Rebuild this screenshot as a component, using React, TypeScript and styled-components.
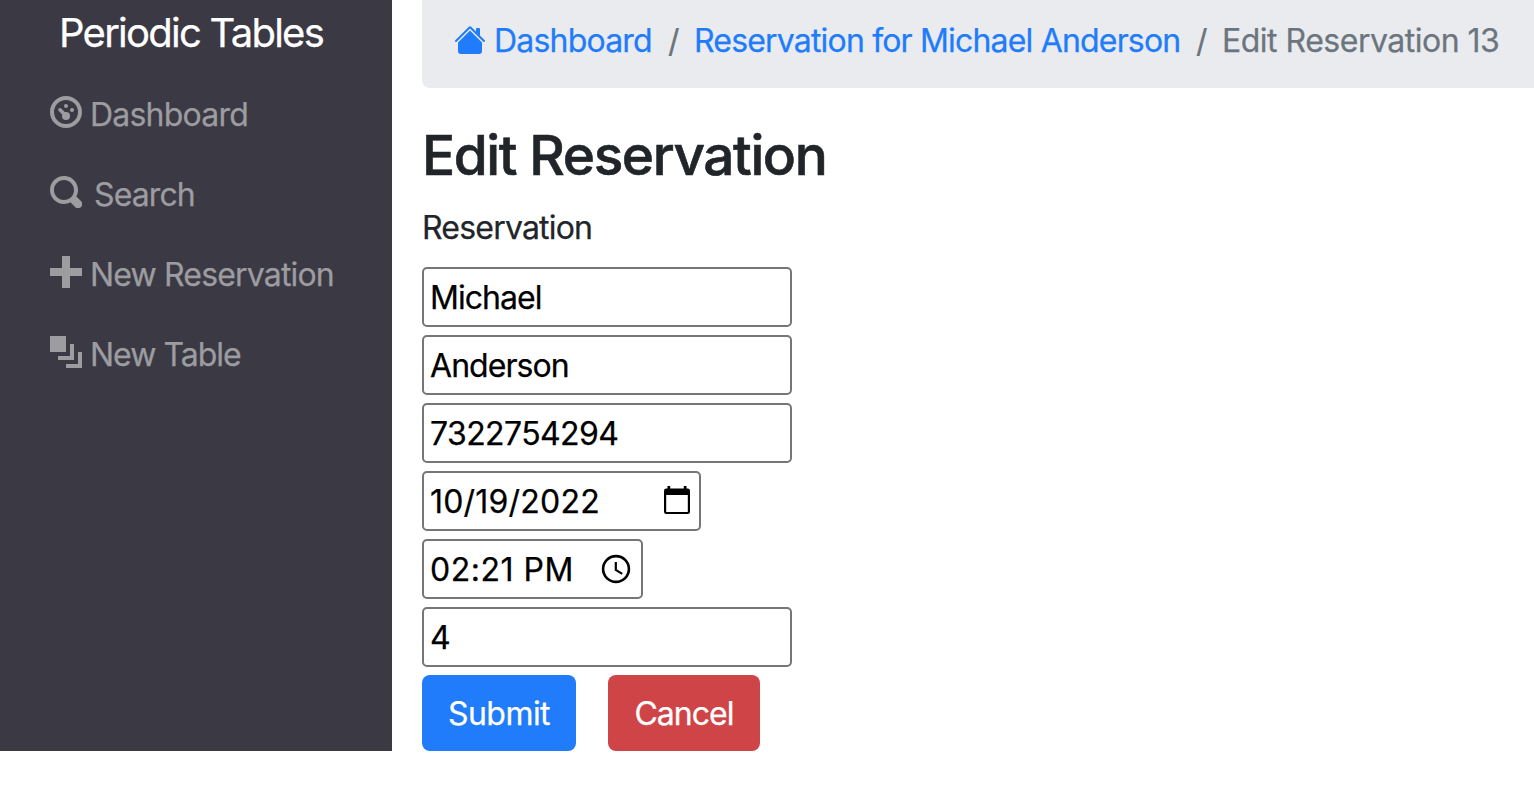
import React from "react";
import styled, { createGlobalStyle } from "styled-components";

const GlobalStyle = createGlobalStyle`
  *, *::before, *::after { box-sizing: border-box; }
  body {
    margin: 0;
    overflow: hidden;
    background: #fff;
    color: #212529;
    font-family: Inter, "Liberation Sans", sans-serif;
    font-size: 32px;
    line-height: 48px;
    -webkit-text-stroke: 0.25px currentColor;
  }
`;

const Page = styled.div`
  display: flex;
  align-items: flex-start;
  width: 1534px;
  height: 794px;
  overflow: hidden;
`;

const Sidebar = styled.nav`
  flex: 0 0 392px;
  height: 751px;
  background: #3b3a44;
`;

const Brand = styled.a<{ $spacing: number }>`
  display: block;
  padding: 3px 0 0 59px;
  height: 74px;
  color: #fff;
  font-size: 40px;
  line-height: 60px;
  white-space: nowrap;
  letter-spacing: ${(p) => p.$spacing}px;
`;

const NavList = styled.ul`
  margin: 0;
  padding: 0;
  list-style: none;
`;

const NavItem = styled.li<{ $gap: number; $spacing: number }>`
  display: flex;
  align-items: center;
  gap: ${(p) => p.$gap}px;
  height: 80px;
  padding-left: 50px;
  color: #9c9ca1;
  white-space: nowrap;
  letter-spacing: ${(p) => p.$spacing}px;

  svg {
    flex: none;
    margin-bottom: 4px;
  }

  span {
    padding-top: 2px;
  }
`;

const Main = styled.main`
  flex: none;
  width: 1142px;
  padding-left: 30px;
`;

const Breadcrumb = styled.ol`
  display: flex;
  align-items: center;
  height: 88px;
  margin: 0;
  padding: 0 0 6px 32px;
  list-style: none;
  border-radius: 0 0 0 8px;
  background: #e9ebef;
  white-space: nowrap;
`;

const Crumb = styled.li<{ $link?: boolean; $width: number; $spacing: number }>`
  display: flex;
  align-items: center;
  gap: 8px;
  flex: none;
  width: ${(p) => p.$width}px;
  color: ${(p) => (p.$link ? "#207cfa" : "#6c757d")};
  letter-spacing: ${(p) => p.$spacing}px;

  svg {
    flex: none;
    margin-bottom: 2px;
  }
`;

const Title = styled.h1<{ $spacing: number }>`
  margin: 34px 0 0;
  height: 67px;
  font-size: 55px;
  line-height: 67px;
  font-weight: 500;
  white-space: nowrap;
  -webkit-text-stroke: 0.6px currentColor;
  letter-spacing: ${(p) => p.$spacing}px;
`;

const Legend = styled.p<{ $spacing: number }>`
  margin: 15px 0 15px;
  letter-spacing: ${(p) => p.$spacing}px;
`;

const Form = styled.form`
  display: flex;
  flex-direction: column;
  gap: 8px;
`;

const Field = styled.label<{ $width: number; $end?: number }>`
  display: flex;
  align-items: center;
  width: ${(p) => p.$width}px;
  height: 60px;
  padding: 0 ${(p) => p.$end ?? 8}px 0 6px;
  border: 2px solid #767676;
  border-radius: 5px;
  background: #fff;

  svg {
    flex: none;
  }
`;

const Input = styled.input<{ $spacing: number }>`
  flex: 1;
  min-width: 0;
  height: 50px;
  margin: 0;
  padding: 1px 0 0;
  border: 0;
  outline: 0;
  background: transparent;
  color: #000;
  font: inherit;
  letter-spacing: ${(p) => p.$spacing}px;
`;

const Actions = styled.div`
  display: flex;
  gap: 32px;
`;

const Button = styled.button<{ $color: string; $width: number; $spacing: number }>`
  width: ${(p) => p.$width}px;
  height: 76px;
  padding: 2px 0 0;
  border: 0;
  border-radius: 8px;
  background: ${(p) => p.$color};
  color: #fff;
  font: inherit;
  letter-spacing: ${(p) => p.$spacing}px;
`;

const Glyph = ({ children }: { children: React.ReactNode }) => (
  <svg width="32" height="32" viewBox="0 0 8 8" fill="currentColor">
    {children}
  </svg>
);

const navItems = [
  {
    label: "Dashboard",
    gap: 8,
    spacing: -0.78,
    icon: (
      <>
        <circle cx="4" cy="4" r="3.5" fill="none" stroke="currentColor" />
        <circle cx="4" cy="2.5" r="0.5" />
        <circle cx="5.5" cy="3.5" r="0.5" />
        <circle cx="4" cy="5" r="1" />
        <path d="M2.500 3.450L4 4.950" stroke="currentColor" strokeWidth="0.9" strokeLinecap="round" />
      </>
    ),
  },
  {
    label: "Search",
    gap: 12,
    spacing: -0.9,
    icon: (
      <path d="M3.5 0c-1.93 0-3.5 1.57-3.5 3.5s1.57 3.5 3.5 3.5c.59 0 1.17-.14 1.66-.41a1 1 0 0 0 .13.13l1 1a1.02 1.02 0 1 0 1.44-1.44l-1-1a1 1 0 0 0-.16-.13c.27-.49.44-1.06.44-1.66 0-1.93-1.55-3.5-3.5-3.5zm0 1c1.39 0 2.5 1.11 2.5 2.5 0 .66-.24 1.27-.66 1.72-.01.01-.02.02-.03.03a1 1 0 0 0-.13.13c-.44.4-1.04.63-1.69.63-1.39 0-2.5-1.11-2.5-2.5s1.11-2.5 2.5-2.5z" />
    ),
  },
  {
    label: "New Reservation",
    gap: 8,
    spacing: -0.83,
    icon: <path d="M3 0v3h-3v2h3v3h2v-3h3v-2h-3v-3h-2z" />,
  },
  {
    label: "New Table",
    gap: 8,
    spacing: -1,
    icon: <path d="M0 0v4h4v-4h-4zm5 2v3h-3v1h4v-4h-1zm2 2v3h-3v1h4v-4h-1z" />,
  },
];

const HouseIcon = () => (
  <svg width="32" height="32" viewBox="0 0 16 16" fill="currentColor">
    <path d="M8 3.293l6 6V13.5a1.5 1.5 0 0 1-1.5 1.5h-9A1.5 1.5 0 0 1 2 13.5V9.293l6-6zM13 2.5V6l-2-2V2.5a.5.5 0 0 1 .5-.5h1a.5.5 0 0 1 .5.5z" />
    <path d="M7.293 1.5a1 1 0 0 1 1.414 0l6.647 6.646a.5.5 0 0 1-.708.708L8 2.207 1.354 8.854a.5.5 0 1 1-.708-.708L7.293 1.5z" />
  </svg>
);

const CalendarIcon = () => (
  <svg width="28" height="30" viewBox="0 0 28 30">
    <path
      fillRule="evenodd"
      d="M4.5 0h2.700v2.500h13.600V0h2.700v2.500h1.200A2.300 2.300 0 0 1 27 4.800v20.900a2.300 2.300 0 0 1-2.300 2.300H3.300A2.300 2.300 0 0 1 1 25.700V4.800A2.300 2.300 0 0 1 3.300 2.500H4.500zM3.200 9v17h21.600V9z"
    />
  </svg>
);

const ClockIcon = () => (
  <svg width="30" height="30" viewBox="0 0 30 30" fill="none" stroke="#000">
    <circle cx="15" cy="15" r="12.900" strokeWidth="2.600" />
    <path d="M14.800 8v8l6.400 3.900" strokeWidth="2.200" />
  </svg>
);

export default function App() {
  return (
    <>
      <GlobalStyle />
      <Page>
        <Sidebar>
          <Brand $spacing={-1.75}>Periodic Tables</Brand>
          <NavList>
            {navItems.map((item) => (
              <NavItem key={item.label} $gap={item.gap} $spacing={item.spacing}>
                <Glyph>{item.icon}</Glyph>
                <span>{item.label}</span>
              </NavItem>
            ))}
          </NavList>
        </Sidebar>
        <Main>
          <Breadcrumb>
            <Crumb $link $width={214} $spacing={-0.8}>
              <HouseIcon />
              <span>Dashboard</span>
            </Crumb>
            <Crumb $width={26} $spacing={0}>/</Crumb>
            <Crumb $link $width={502} $spacing={-0.82}>Reservation for Michael Anderson</Crumb>
            <Crumb $width={26} $spacing={0}>/</Crumb>
            <Crumb $width={290} $spacing={-0.5}>Edit Reservation 13</Crumb>
          </Breadcrumb>
          <Title $spacing={-1.42}>Edit Reservation</Title>
          <Legend $spacing={-0.8}>Reservation</Legend>
          <Form onSubmit={(e: React.FormEvent) => e.preventDefault()}>
            <Field $width={370}>
              <Input $spacing={-0.95} defaultValue="Michael" />
            </Field>
            <Field $width={370}>
              <Input $spacing={-0.95} defaultValue="Anderson" />
            </Field>
            <Field $width={370}>
              <Input $spacing={-0.6} defaultValue="7322754294" />
            </Field>
            <Field $width={279}>
              <Input $spacing={0.2} defaultValue="10/19/2022" />
              <CalendarIcon />
            </Field>
            <Field $width={221} $end={10}>
              <Input $spacing={0.5} defaultValue="02:21 PM" />
              <ClockIcon />
            </Field>
            <Field $width={370}>
              <Input $spacing={-0.4} defaultValue="4" />
            </Field>
            <Actions>
              <Button type="submit" $color="#207cfa" $width={154} $spacing={-0.55}>Submit</Button>
              <Button type="button" $color="#cf4447" $width={152} $spacing={-0.95}>Cancel</Button>
            </Actions>
          </Form>
        </Main>
      </Page>
    </>
  );
}
